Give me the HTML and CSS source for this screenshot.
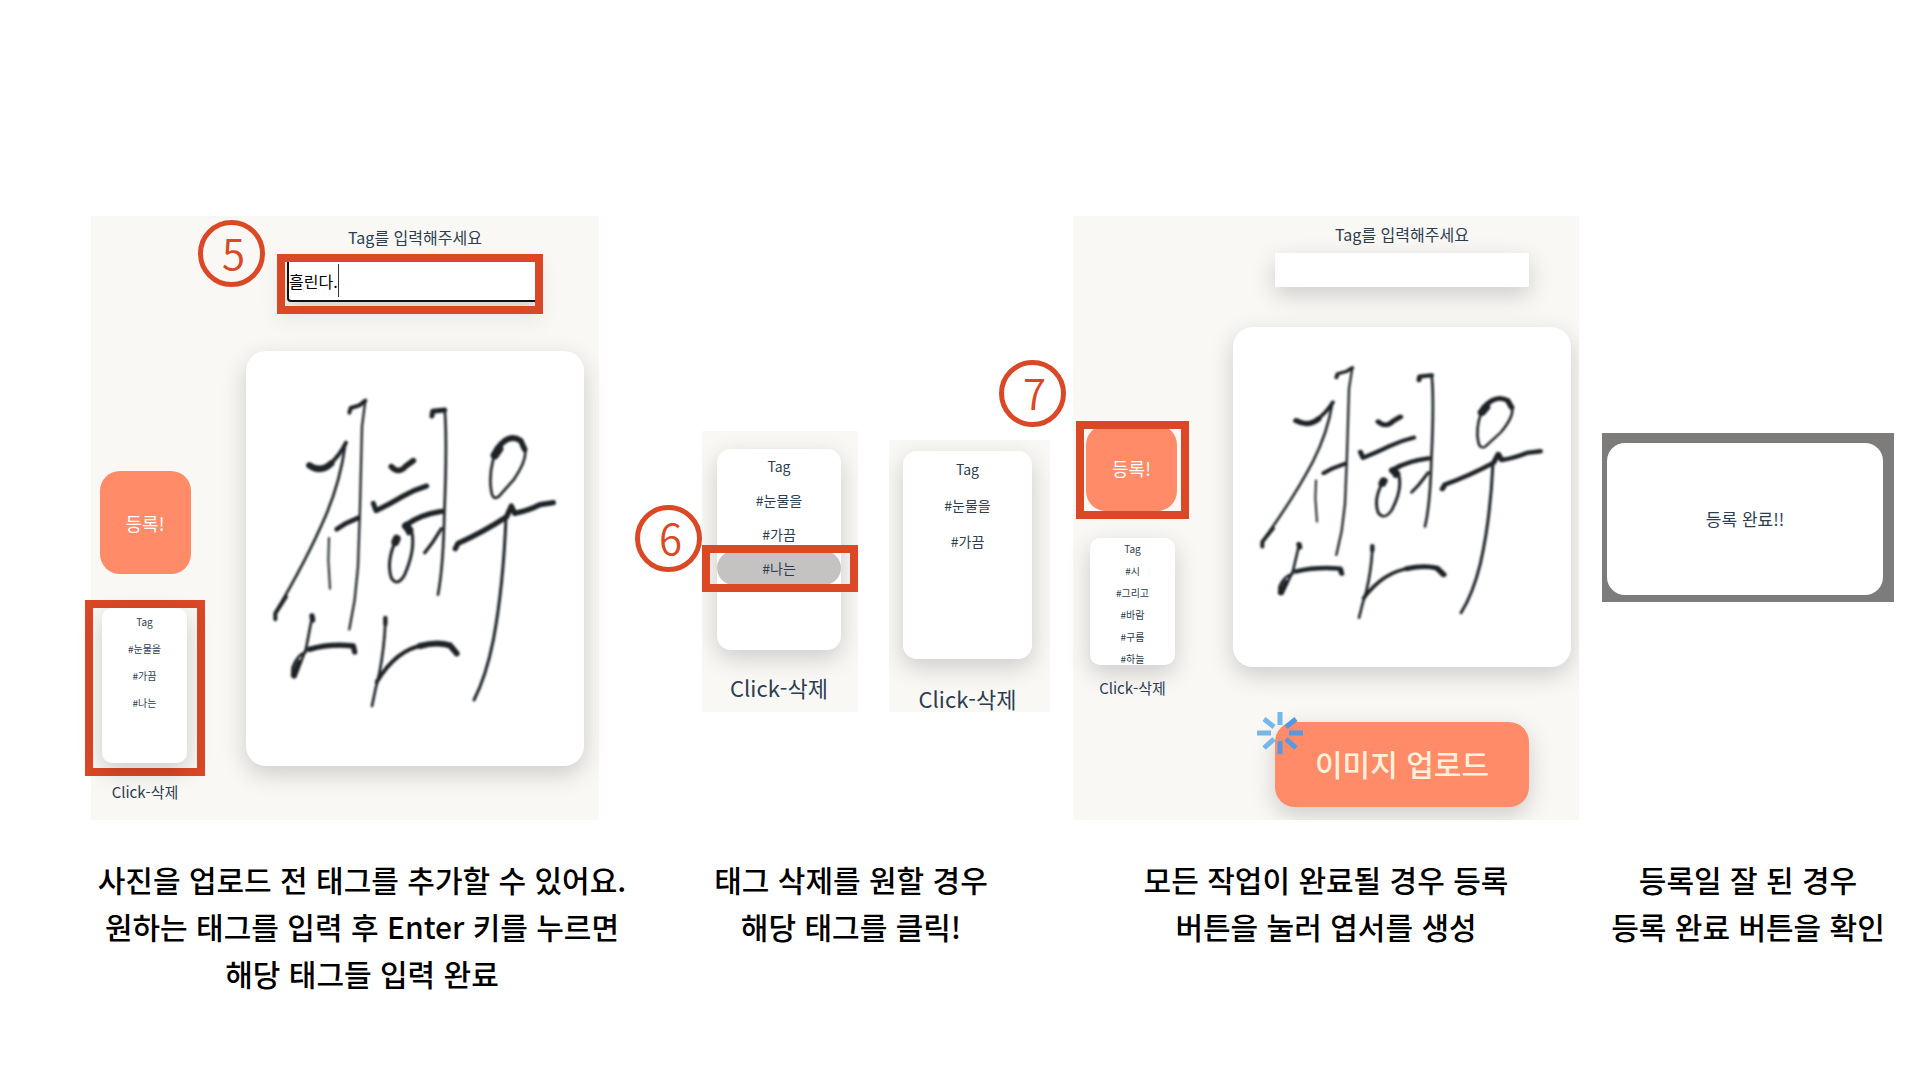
FILE: index.html
```html
<!DOCTYPE html>
<html lang="ko">
<head>
<meta charset="utf-8">
<meta name="viewport" content="width=device-width, initial-scale=1">
<title>태그 입력과 등록 안내</title>
<link rel="stylesheet" href="styles.css">
</head>
<body>
<svg class="defs" aria-hidden="true">
  <defs>
    <filter id="soft" x="-5%" y="-5%" width="110%" height="110%"><feGaussianBlur stdDeviation="3"/></filter>
    <symbol id="sign" viewBox="0 0 338 415" preserveAspectRatio="none">
      <g transform="translate(-16 29) scale(.33333)" fill="none" stroke="#1d2126" stroke-linecap="round" stroke-linejoin="round" filter="url(#soft)">
        <path stroke-width="12" d="M358 98L362 84L388 76L406 62"/>
        <path stroke-width="7" d="M406 62L396 140L390 380L384 560L374 660L358 748"/>
        <path stroke-width="19" d="M238 256Q272 280 304 250"/>
        <path stroke-width="12" d="M300 252Q328 228 348 188"/>
        <path stroke-width="8" d="M346 192Q332 300 288 405Q230 540 136 698"/>
        <path stroke-width="12" d="M168 650L136 700L136 718"/>
        <path stroke-width="14" d="M320 448L348 430L384 414"/>
        <path stroke-width="6" d="M297 474L295 540L300 626"/>
        <path stroke-width="17" d="M484 260Q506 284 528 258L550 242"/>
        <path stroke-width="15" d="M430 370L438 392Q480 372 520 348Q556 328 590 318"/>
        <path stroke-width="15" d="M606 108L608 94L644 90"/>
        <path stroke-width="8" d="M644 88Q652 180 643 400Q640 560 624 644"/>
        <path stroke-width="16" d="M634 394Q570 404 530 434L536 458"/>
        <path stroke-width="24" d="M528 438L538 450M500 476L496 486"/>
        <path stroke-width="9" d="M546 458Q556 510 524 584Q502 622 484 594Q468 544 498 480"/>
        <path stroke-width="10" d="M634 446L606 490L584 518"/>
        <path stroke-width="25" d="M794 226L808 206"/>
        <path stroke-width="17" d="M800 208Q836 158 872 182L884 208"/>
        <path stroke-width="8" d="M884 206Q894 236 852 298L806 350Q788 362 784 334Q776 290 790 236"/>
        <path stroke-width="16" d="M676 506L684 490Q760 456 830 410L844 378L854 400Q896 392 930 374L970 368"/>
        <path stroke-width="9" d="M828 410Q820 620 790 780Q768 890 732 960"/>
        <path stroke-width="16" d="M246 708L248 720"/>
        <path stroke-width="8" d="M246 712L228 806L196 890Q184 900 188 862Q202 824 228 816"/>
        <path stroke-width="15" d="M190 886L208 846"/>
        <path stroke-width="16" d="M238 808Q300 790 370 798L374 816"/>
        <path stroke-width="13" d="M466 714L466 732"/>
        <path stroke-width="8" d="M466 730Q462 810 448 880Q436 926 426 978"/>
        <path stroke-width="12" d="M440 906Q500 808 580 796"/>
        <path stroke-width="18" d="M570 798Q620 784 660 796L680 820"/>
      </g>
    </symbol>
  </defs>
</svg>

<main class="guide">
  <section class="step">
    <div class="stage">
      <div class="panel panel-input">
        <span class="badge badge-five">5</span>
        <div class="side">
          <button class="submit" type="button">등록!</button>
          <div class="mark mark-tags">
            <ul class="tags rows-m">
              <li>Tag</li>
              <li><button type="button">#눈물을</button></li>
              <li><button type="button">#가끔</button></li>
              <li><button type="button">#나는</button></li>
            </ul>
          </div>
          <p class="hint">Click-삭제</p>
        </div>
        <div class="work">
          <label class="label" for="tag-a">Tag를 입력해주세요</label>
          <div class="mark mark-field">
            <input class="field field-active" id="tag-a" type="text" value="흘린다.">
            <span class="caret"></span>
          </div>
          <svg class="photo photo-tall" role="img" aria-label="손글씨 사진"><use href="#sign" width="100%" height="100%"/></svg>
        </div>
      </div>
    </div>
    <p class="caption">사진을 업로드 전 태그를 추가할 수 있어요.<br>원하는 태그를 입력 후 Enter 키를 누르면<br>해당 태그들 입력 완료</p>
  </section>

  <section class="step">
    <div class="stage stage-pair">
      <span class="badge badge-six">6</span>
      <div class="panel panel-before">
        <ul class="tags rows-l">
          <li>Tag</li>
          <li><button type="button">#눈물을</button></li>
          <li><button type="button">#가끔</button></li>
          <li class="picked"><button type="button">#나는</button></li>
        </ul>
        <p class="hint hint-large">Click-삭제</p>
      </div>
      <div class="panel panel-after">
        <ul class="tags rows-xl">
          <li>Tag</li>
          <li><button type="button">#눈물을</button></li>
          <li><button type="button">#가끔</button></li>
        </ul>
        <p class="hint hint-large">Click-삭제</p>
      </div>
    </div>
    <p class="caption">태그 삭제를 원할 경우<br>해당 태그를 클릭!</p>
  </section>

  <section class="step step-send">
    <div class="stage">
      <div class="panel panel-send">
        <span class="badge badge-seven">7</span>
        <div class="side">
          <div class="mark mark-submit"><button class="submit" type="button">등록!</button></div>
          <ul class="tags rows-s">
            <li>Tag</li>
            <li><button type="button">#시</button></li>
            <li><button type="button">#그리고</button></li>
            <li><button type="button">#바람</button></li>
            <li><button type="button">#구름</button></li>
            <li><button type="button">#하늘</button></li>
          </ul>
          <p class="hint">Click-삭제</p>
        </div>
        <div class="work">
          <label class="label" for="tag-b">Tag를 입력해주세요</label>
          <input class="field" id="tag-b" type="text">
          <svg class="photo" role="img" aria-label="손글씨 사진"><use href="#sign" width="100%" height="100%"/></svg>
          <div class="upload-wrap">
            <button class="upload" type="button">이미지 업로드</button>
            <svg class="burst" viewBox="0 0 46 42" aria-hidden="true">
              <g fill="none" stroke-width="5">
                <path stroke="#76b7ea" d="M23 0V13M7 7L17 15M0 21H14M7 36L17 27"/>
                <path stroke="#5799e0" d="M39 7L29 15M32 21H46M39 36L29 27M23 29V42"/>
              </g>
            </svg>
          </div>
        </div>
      </div>
    </div>
    <p class="caption">모든 작업이 완료될 경우 등록<br>버튼을 눌러 엽서를 생성</p>
  </section>

  <section class="step">
    <div class="stage">
      <div class="backdrop"><div class="dialog" role="dialog">등록 완료!!</div></div>
    </div>
    <p class="caption">등록일 잘 된 경우<br>등록 완료 버튼을 확인</p>
  </section>
</main>
</body>
</html>
```
FILE: styles.css
```css
:root {
  --red: #da4826;
  --coral: #ff8b69;
  --ink: #2c3e50;
  --paper: #f9f8f5;
  --shadow: 0 8px 24px rgba(0, 0, 0, .18);
}

* { box-sizing: border-box; }

body {
  margin: 0;
  background: #fff;
  color: var(--ink);
  font-family: "Noto Sans CJK KR", sans-serif;
}

button, input { font: inherit; color: inherit; }
button { border: 0; padding: 0; background: none; cursor: pointer; }
p, ul { margin: 0; padding: 0; }
ul { list-style: none; }

.defs { position: absolute; width: 0; height: 0; }

.guide {
  display: grid;
  grid-template-columns: 542fr 436fr 533fr 292fr;
  padding: 216px 26px 40px 91px;
}

.step { min-width: 0; }
.step-send { padding: 0 23px 0 4px; }

.stage {
  position: relative;
  display: flex;
  align-items: flex-start;
  min-height: 604px;
}

.caption {
  margin-top: 36px;
  color: #000;
  font-size: 30px;
  font-weight: 500;
  line-height: 47px;
  text-align: center;
  white-space: nowrap;
}

/* the panels clip the soft shadows of their cards */
.panel { position: relative; background: var(--paper); }

.panel-input, .panel-send {
  display: grid;
  flex: 1;
  min-height: 604px;
}

.panel-input { grid-template-columns: 108px 1fr; margin-right: 34px; }
.panel-send { grid-template-columns: 119px 1fr; }

.side, .work {
  display: flex;
  flex-direction: column;
  align-items: center;
  min-width: 0;
}

.panel-input .side { padding-top: 255px; }
.panel-send .side { padding-top: 205px; }
.panel-input .work { padding: 9px 15px 0 47px; }
.panel-send .work { padding: 6px 8px 0 41px; }

.badge {
  position: absolute;
  z-index: 2;
  width: 67px;
  height: 67px;
  padding-left: 4px;
  border: 5px solid var(--red);
  border-radius: 50%;
  color: var(--red);
  font-size: 42px;
  font-weight: 350;
  line-height: 54px;
  text-align: center;
}

.badge-five { left: 107px; top: 4px; }
.badge-six { left: 2px; top: 289px; }
.badge-seven { left: -74px; top: 144px; }

.mark { border: 8px solid var(--red); }
.mark-tags { width: 120px; height: 176px; margin-top: 26px; padding: 0 9px; flex: none; }
.mark-submit { width: 113px; height: 98px; overflow: hidden; }
.mark-field {
  position: relative;
  width: 266px;
  height: 60px;
  margin: 5px 10px 37px 0;
  padding-left: 2px;
  overflow: hidden;
  box-shadow: 0 8px 20px rgba(0, 0, 0, .06);
}

.submit {
  width: 91px;
  height: 103px;
  border-radius: 20px;
  background: var(--coral);
  color: #fff;
  font-size: 18px;
}

.mark-submit .submit { display: block; height: 86px; margin: -4px 0 0 2px; }

.label { font-size: 16px; line-height: 24px; white-space: nowrap; }

.field {
  width: 254px;
  height: 34px;
  border: 0;
  background: #fff;
  box-shadow: var(--shadow);
}

.panel-send .field { margin: 7px 0 40px; }

.mark-field .field-active {
  display: block;
  height: 40px;
  padding: 0;
  border: 2px solid #101010;
  border-top: 0;
  border-radius: 0 0 4px 4px;
  color: #000;
  font-size: 16px;
  outline: none;
}

.caret {
  position: absolute;
  left: 53px;
  top: 2px;
  width: 1px;
  height: 33px;
  background: #333;
}

.photo {
  width: 100%;
  height: 340px;
  border-radius: 20px;
  background: #fff;
  box-shadow: var(--shadow);
}

.photo-tall { height: 415px; }

.panel-send, .panel-before, .panel-after { clip-path: inset(0); }
.panel-send { clip-path: inset(0 0 0 -80px); }

.tags {
  border-radius: 10px;
  background: #fff;
  box-shadow: var(--shadow);
  text-align: center;
}

.tags button { width: 100%; height: 100%; display: block; }

.rows-s, .rows-m { width: 85px; font-size: 10px; }
.rows-s { height: 127px; margin-top: 19px; overflow: hidden; line-height: 22px; }
.rows-s li { height: 22px; }
.rows-m { height: 155px; line-height: 27px; }
.rows-m li { height: 27px; }
.rows-l, .rows-xl { border-radius: 14px; font-size: 14px; }
.rows-l { height: 201px; line-height: 34px; }
.rows-l li { height: 34px; }
.rows-xl { height: 208px; line-height: 36px; }
.rows-xl li { height: 36px; }

.picked { position: relative; border-radius: 17px; background: #c5c3c1; }
.picked::after {
  content: "";
  position: absolute;
  inset: -6px -17px -7px -15px;
  border: 8px solid var(--red);
}

.hint { font-size: 15px; line-height: 20px; white-space: nowrap; text-align: center; }
.panel-input .hint { margin-top: 6px; }
.panel-send .hint { margin-top: 13px; }
.panel .hint-large { margin-top: 23px; font-size: 22px; line-height: 28px; }

.stage-pair { justify-content: space-between; align-items: flex-end; padding: 0 19px 108px 69px; }
.panel-before { width: 156px; height: 281px; padding: 18px 17px 0 15px; }
.panel-after { width: 161px; height: 272px; padding: 11px 18px 0 14px; }
.panel-after .hint-large { margin-top: 25px; }

.upload-wrap { position: relative; margin-top: 55px; }
.upload {
  width: 254px;
  height: 85px;
  padding-bottom: 4px;
  border-radius: 20px;
  background: var(--coral);
  box-shadow: var(--shadow);
  color: #fff1dc;
  font-size: 30px;
  font-weight: 500;
}

.burst { position: absolute; left: -18px; top: -10px; width: 46px; height: 42px; }

.backdrop {
  flex: 1;
  margin-top: 217px;
  padding: 10px 11px 7px 5px;
  background: #7d7c7a;
}

.dialog {
  display: flex;
  align-items: center;
  justify-content: center;
  height: 152px;
  padding-bottom: 2px;
  border-radius: 18px;
  background: #fff;
  font-size: 17px;
}
```
